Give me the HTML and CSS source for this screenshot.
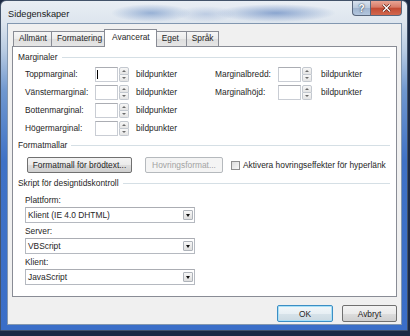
FILE: index.html
```html
<!DOCTYPE html>
<html lang="sv">
<head>
    <meta charset="UTF-8">
    <title>Sidegenskaper</title>
    <link rel="stylesheet" href="styles.css">
</head>
<body>
    <div class="window">
        <div class="titlebar">
            <span class="title">Sidegenskaper</span>
            <div class="caption">
                <span class="cap-help">?</span>
                <span class="cap-close">
                    <svg width="9" height="8" viewBox="0 0 9 8">
                        <path d="M1 0.5 L8 7.5 M8 0.5 L1 7.5" stroke="#5a1e14" stroke-width="2.6"/>
                        <path d="M1 0.5 L8 7.5 M8 0.5 L1 7.5" stroke="#fff" stroke-width="1.4"/>
                    </svg>
                </span>
            </div>
        </div>

        <div class="client">
            <div class="tabs">
                <span class="tab">Allmänt</span>
                <span class="tab">Formatering</span>
                <span class="tab active">Avancerat</span>
                <span class="tab">Eget</span>
                <span class="tab">Språk</span>
            </div>

            <div class="panel">
                <div class="group-head"><span>Marginaler</span><i></i></div>
                <div class="margins">
                    <div class="col col-left">
                        <div class="row">
                            <label>Toppmarginal:</label>
                            <div class="field"><span class="caret"></span></div>
                            <div class="spin"><b class="up"></b><b class="down"></b></div>
                            <span class="unit">bildpunkter</span>
                        </div>
                        <div class="row">
                            <label>Vänstermarginal:</label>
                            <div class="field"></div>
                            <div class="spin"><b class="up"></b><b class="down"></b></div>
                            <span class="unit">bildpunkter</span>
                        </div>
                        <div class="row">
                            <label>Bottenmarginal:</label>
                            <div class="field"></div>
                            <div class="spin"><b class="up"></b><b class="down"></b></div>
                            <span class="unit">bildpunkter</span>
                        </div>
                        <div class="row">
                            <label>Högermarginal:</label>
                            <div class="field"></div>
                            <div class="spin"><b class="up"></b><b class="down"></b></div>
                            <span class="unit">bildpunkter</span>
                        </div>
                    </div>
                    <div class="col col-right">
                        <div class="row">
                            <label>Marginalbredd:</label>
                            <div class="field"></div>
                            <div class="spin"><b class="up"></b><b class="down"></b></div>
                            <span class="unit">bildpunkter</span>
                        </div>
                        <div class="row">
                            <label>Marginalhöjd:</label>
                            <div class="field"></div>
                            <div class="spin"><b class="up"></b><b class="down"></b></div>
                            <span class="unit">bildpunkter</span>
                        </div>
                    </div>
                </div>

                <div class="group-head"><span>Formatmallar</span><i></i></div>
                <div class="styles-row">
                    <button class="btn btn-body">Formatmall för brödtext...</button>
                    <button class="btn btn-hover" disabled>Hovringsformat...</button>
                    <span class="check"></span>
                    <span class="check-label">Aktivera hovringseffekter för hyperlänk</span>
                </div>

                <div class="group-head"><span>Skript för designtidskontroll</span><i></i></div>
                <div class="scripts">
                    <div class="field-label">Plattform:</div>
                    <div class="select"><span>Klient (IE 4.0 DHTML)</span><b class="drop"></b></div>
                    <div class="field-label">Server:</div>
                    <div class="select"><span>VBScript</span><b class="drop"></b></div>
                    <div class="field-label">Klient:</div>
                    <div class="select"><span>JavaScript</span><b class="drop"></b></div>
                </div>
            </div>

            <div class="footer">
                <button class="btn btn-ok">OK</button>
                <button class="btn btn-cancel">Avbryt</button>
            </div>
        </div>
    </div>
</body>
</html>
```

FILE: styles.css
```css
body {
    margin: 0;
    width: 410px;
    height: 336px;
    overflow: hidden;
    background: #1c2a44;
    font-family: "Liberation Sans", Arial, sans-serif;
    font-size: 8.4px;
    color: #262626;
}

.window {
    box-sizing: border-box;
    width: 408px;
    height: 331px;
    border: 1px solid #43536a;
    border-radius: 6px 6px 0 0;
    padding: 0 5px 5px 6px;
    display: flex;
    flex-direction: column;
    background:
        radial-gradient(ellipse 40px 9px at 150px 12px, rgba(90, 130, 190, 0.55), transparent),
        radial-gradient(ellipse 60px 9px at 275px 12px, rgba(80, 120, 185, 0.6), transparent),
        radial-gradient(ellipse 30px 8px at 205px 13px, rgba(120, 150, 200, 0.35), transparent),
        linear-gradient(180deg, #e9eef4 0, #dde5ee 22px, #b8cbe2 50px, #6f97cf 90px, #3f72c6 160px, #3a6ec8 100%);
}

.titlebar {
    height: 22px;
    display: flex;
    align-items: flex-start;
    position: relative;
}

.title {
    font-size: 9.2px;
    color: #1a1a1a;
    line-height: 12px;
    margin-top: 7px;
    margin-left: 1px;
}

.caption {
    position: absolute;
    top: 0;
    right: 0;
    display: flex;
    height: 15px;
}

.cap-help,
.cap-close {
    box-sizing: border-box;
    height: 15px;
    display: flex;
    align-items: center;
    justify-content: center;
    border: 1px solid #59677d;
    border-top: none;
}

.cap-help {
    width: 18px;
    border-radius: 0 0 0 4px;
    border-right: none;
    background: linear-gradient(180deg, #d8e2ee 0, #b9c9dd 50%, #9fb4cf 51%, #b3c6de 100%);
    color: #fff;
    font-weight: bold;
    font-size: 10px;
    text-shadow: 0 0 2px #3a4a60, 0 0 1px #3a4a60;
}

.cap-close {
    width: 32px;
    border-radius: 0 0 4px 0;
    background: linear-gradient(180deg, #e8a595 0, #d77a66 45%, #c14a32 50%, #d2674e 100%);
}

.client {
    flex: 1;
    display: flex;
    flex-direction: column;
    background: #f0f0f0;
    border: 1px solid #8297b0;
}

/* tabs */
.tabs {
    display: flex;
    align-items: flex-end;
    padding: 5px 0 0 5px;
    height: 17px;
}

.tab {
    box-sizing: border-box;
    min-width: 31px;
    height: 15px;
    line-height: 13px;
    padding: 0 4px 0 5px;
    border: 1px solid #898c95;
    border-bottom: none;
    margin-right: -1px;
    background: linear-gradient(180deg, #f6f6f6 0, #ebebeb 50%, #dedede 51%, #e6e6e6 100%);
}

.tab.active {
    position: relative;
    height: 18px;
    margin: 0 -1px -1px -2px;
    padding: 0 6px 0 7px;
    line-height: 15px;
    background: #fff;
    z-index: 1;
}

.panel {
    box-sizing: border-box;
    height: 251px;
    margin: 0 4px;
    border: 1px solid #898c95;
    background: #fff;
    padding: 4px 6px 0 5px;
}

.group-head {
    display: flex;
    align-items: center;
    height: 12px;
    line-height: 12px;
}

.group-head i {
    flex: 1;
    height: 1px;
    margin-left: 4px;
    background: #d5dfe5;
}

/* margins */
.margins {
    display: flex;
    margin: 2px 0 0 7px;
}

.col-left {
    width: 190px;
}

.row {
    display: flex;
    align-items: center;
    height: 18px;
}

.col-left label {
    width: 70px;
}

.col-right label {
    width: 63px;
}

.field {
    box-sizing: border-box;
    width: 23px;
    height: 15px;
    border: 1px solid #c9cdd4;
    border-top-color: #abadb3;
    background: #fff;
    display: flex;
    align-items: center;
    padding-left: 1px;
}

.caret {
    width: 1px;
    height: 9px;
    background: #000;
}

.spin {
    display: flex;
    flex-direction: column;
    margin-left: 1px;
    width: 10px;
    height: 15px;
}

.spin b {
    box-sizing: border-box;
    flex: 1;
    border: 1px solid #c3c8cf;
    background: linear-gradient(180deg, #f7f7f7, #e4e4e4);
    display: flex;
    align-items: center;
    justify-content: center;
}

.spin b.up {
    border-radius: 2px 2px 0 0;
}

.spin b.down {
    border-top: none;
    border-radius: 0 0 2px 2px;
}

.spin b.up::before {
    content: "";
    border-left: 2px solid transparent;
    border-right: 2px solid transparent;
    border-bottom: 2px solid #6a6a6a;
}

.spin b.down::before {
    content: "";
    border-left: 2px solid transparent;
    border-right: 2px solid transparent;
    border-top: 2px solid #6a6a6a;
}

.unit {
    margin-left: 7px;
}

.col-right .unit {
    margin-left: 9px;
}

/* formatmallar */
.group-head + .styles-row {
    margin-top: 6px;
}

.margins + .group-head {
    margin-top: 2px;
}

.styles-row {
    display: flex;
    align-items: center;
    padding-left: 9px;
    height: 16px;
}

.btn {
    box-sizing: border-box;
    height: 16px;
    padding: 0;
    font-family: inherit;
    font-size: 8.4px;
    color: #262626;
    border: 1px solid #707070;
    border-radius: 2px;
    background: linear-gradient(180deg, #f3f3f3 0, #ebebeb 50%, #dddddd 51%, #cfcfcf 100%);
}

.btn-body {
    width: 105px;
}

.btn-hover {
    width: 78px;
    margin-left: 13px;
    border-color: #b5b9bd;
    background: #f4f4f4;
    color: #a3a3a3;
}

.check {
    box-sizing: border-box;
    width: 9px;
    height: 9px;
    margin-left: 8px;
    border: 1px solid #8f8f8f;
    background: linear-gradient(135deg, #dcdcdc, #f8f8f8);
}

.check-label {
    margin-left: 3px;
}

.styles-row + .group-head {
    margin-top: 4px;
}

/* scripts */
.scripts {
    margin: 5px 0 0 7px;
}

.field-label {
    height: 13px;
    line-height: 12px;
}

.select {
    box-sizing: border-box;
    width: 170px;
    height: 16px;
    margin-bottom: 2px;
    border: 1px solid #b5b9c0;
    border-top-color: #abadb3;
    background: #fff;
    display: flex;
    align-items: center;
    padding-left: 2px;
}

.select span {
    flex: 1;
}

.drop {
    box-sizing: border-box;
    width: 10px;
    height: 10px;
    margin-right: 1px;
    border: 1px solid #aeb3ba;
    border-radius: 1px;
    background: linear-gradient(180deg, #f7f7f7, #dedede);
    display: flex;
    align-items: center;
    justify-content: center;
}

.drop::before {
    content: "";
    border-left: 2.5px solid transparent;
    border-right: 2.5px solid transparent;
    border-top: 3px solid #111;
}

/* footer */
.footer {
    display: flex;
    justify-content: flex-end;
    gap: 9px;
    padding: 8px 4px 0 0;
}

.btn-ok,
.btn-cancel {
    height: 17px;
}

.btn-ok {
    width: 56px;
    border-color: #3c8ec4;
    box-shadow: inset 0 0 0 1px #a9e0f7;
    background: linear-gradient(180deg, #f2f7fa 0, #e7eff4 50%, #d7e3ea 51%, #cbd9e2 100%);
}

.btn-cancel {
    width: 55px;
}
```
